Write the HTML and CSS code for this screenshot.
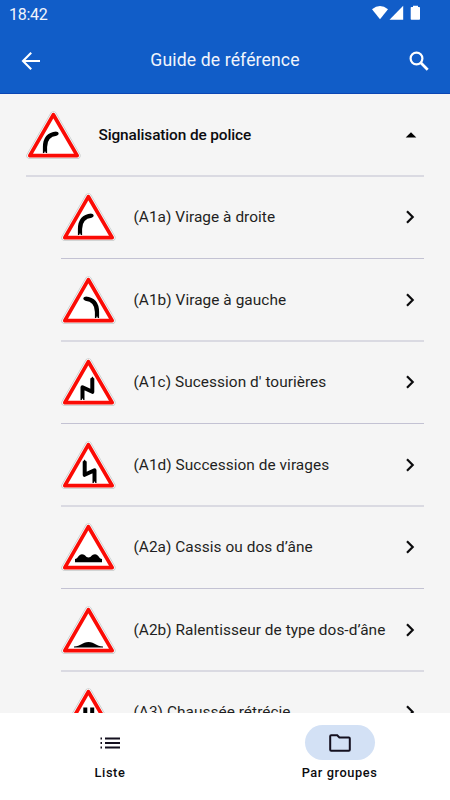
FILE: index.html
```html
<!DOCTYPE html>
<html lang="fr">
<head>
<meta charset="utf-8">
<title>Guide de référence</title>
<link rel="stylesheet" href="styles.css">
</head>
<body>
<svg class="defs" aria-hidden="true">
  <symbol id="sign" viewBox="0 0 55 48">
    <path d="M27.4 3.7 3.8 44.6H51.200Z" fill="#fff" stroke="#c3c7c7" stroke-width="6.8" stroke-linejoin="round"/>
    <path d="M27.4 3.7 3.8 44.6H51.200Z" fill="#fff" stroke="#f6f9f9" stroke-width="5.4" stroke-linejoin="round"/>
    <path d="M27.4 3.7 3.8 44.6H51.200Z" fill="#fff" stroke="#fb0b05" stroke-width="3.7" stroke-linejoin="round"/>
  </symbol>
  <symbol id="right" viewBox="0 0 55 48">
    <path d="M19 42V36C19 28 23 23.4 30.5 22.6" fill="none" stroke="#000" stroke-width="4.2"/>
    <circle cx="30.7" cy="22.6" r="1.9"/><path d="M18 42.5 19 40l1 2.5Z" fill="#fff"/>
  </symbol>
  <symbol id="left" viewBox="0 0 55 48">
    <path d="M36 42V36C36 28 32 23.4 24.5 22.6" fill="none" stroke="#000" stroke-width="4.2"/>
    <circle cx="24.3" cy="22.6" r="1.9"/><path d="M35 42.5 36 40l1 2.5Z" fill="#fff"/>
  </symbol>
  <symbol id="bends-right" viewBox="0 0 55 48">
    <path d="M21.5 42V29.2L31.3 33.800V20.5" fill="none" stroke="#000" stroke-width="4" stroke-linejoin="round"/>
    <path d="M29.4 21 31.5 18.6 33.2 21Z"/><path d="M20.5 42.5l1-2.5 1 2.5Z" fill="#fff"/>
  </symbol>
  <symbol id="bends-left" viewBox="0 0 55 48">
    <path d="M33.5 42V29.2L23.7 33.800V20.5" fill="none" stroke="#000" stroke-width="4" stroke-linejoin="round"/>
    <path d="M21.8 21 23.5 18.6 25.6 21Z"/><path d="M32.5 42.5l1-2.5 1 2.5Z" fill="#fff"/>
  </symbol>
  <symbol id="bumps" viewBox="0 0 55 48">
    <path d="M14 39.3V36C17 36 17.500 31.300 21 31.300C24.500 31.300 24.500 34.500 27.500 34.500S30.500 31.300 34 31.300C37.500 31.300 38 36 41 36V39.300Z"/>
  </symbol>
  <symbol id="hump" viewBox="0 0 55 48">
    <path d="M13 41.500V40.500C20 40.500 21 36 27.500 36S35 40.500 42 40.500V41.500Z"/>
  </symbol>
  <symbol id="narrow" viewBox="0 0 55 48">
    <path d="M22.300 19.500h4v18h-6v-8l2-3zM29.200 19.500h4v7l2 3v8h-6z"/>
  </symbol>
  <symbol id="chevron" viewBox="0 0 10 14">
    <path d="M2 1.300 7.700 7 2 12.700" fill="none" stroke="#0b0b0d" stroke-width="2.200"/>
  </symbol>
</svg>

<header class="top">
  <div class="status">
    <span>18:42</span>
    <svg class="status-icons" width="49" height="16" viewBox="0 0 49 16" fill="#fff">
      <path d="M0 4.200Q8 -2.200 16 4.200L8 14.200Z"/><path d="M17.500 14.800H31.200V.8Z"/>
      <path d="M39 2h2V.800h5V2h1.200q.800 0 .800.800v11.200q0 .800-.800.800h-7.700q-.800 0-.800-.800V2.800q0-.800.800-.800Z"/>
    </svg>
  </div>
  <div class="bar">
    <svg width="20" height="20" viewBox="0 0 20 20" fill="none" stroke="#fff" stroke-width="2.100"><path d="M19 10H3M10.200 1.700 2 10l8.200 8.300"/></svg>
    <h1>Guide de référence</h1>
    <svg width="20" height="20" viewBox="0 0 20 20" fill="none" stroke="#fff" stroke-width="2.200"><circle cx="7.500" cy="7.500" r="5.900"/><path d="m11.800 11.800 6.900 6.900" stroke-width="2.700"/></svg>
  </div>
</header>

<main class="list">
  <div class="row group">
    <svg class="sign"><use href="#sign"/><use href="#right"/></svg><span class="label">Signalisation de police</span>
    <svg class="caret" width="12" height="6" viewBox="0 0 12 6"><path d="M.700 5.500 6 .200l5.300 5.300Z"/></svg>
  </div>
  <div class="items">
    <div class="row"><svg class="sign"><use href="#sign"/><use href="#right"/></svg><span class="label">(A1a) Virage à droite</span><svg class="chev"><use href="#chevron"/></svg></div>
    <div class="row"><svg class="sign"><use href="#sign"/><use href="#left"/></svg><span class="label">(A1b) Virage à gauche</span><svg class="chev"><use href="#chevron"/></svg></div>
    <div class="row"><svg class="sign"><use href="#sign"/><use href="#bends-right"/></svg><span class="label">(A1c) Sucession d' tourières</span><svg class="chev"><use href="#chevron"/></svg></div>
    <div class="row"><svg class="sign"><use href="#sign"/><use href="#bends-left"/></svg><span class="label">(A1d) Succession de virages</span><svg class="chev"><use href="#chevron"/></svg></div>
    <div class="row"><svg class="sign"><use href="#sign"/><use href="#bumps"/></svg><span class="label">(A2a) Cassis ou dos d’âne</span><svg class="chev"><use href="#chevron"/></svg></div>
    <div class="row"><svg class="sign"><use href="#sign"/><use href="#hump"/></svg><span class="label">(A2b) Ralentisseur de type dos-d’âne</span><svg class="chev"><use href="#chevron"/></svg></div>
    <div class="row"><svg class="sign"><use href="#sign"/><use href="#narrow"/></svg><span class="label">(A3) Chaussée rétrécie</span><svg class="chev"><use href="#chevron"/></svg></div>
  </div>
</main>

<nav class="tabs">
  <div class="tab">
    <span class="pill"><svg width="20" height="12" viewBox="0 0 20 12" fill="#14101f"><path d="M5 .500h15v2H5zM5 5h15v2H5zM5 9.500h15v2H5zM.500.500h1.500v2h-1.500zM.500 5h1.500v2h-1.500zM.500 9.500h1.500v2h-1.500z"/></svg></span>
    <span>Liste</span>
  </div>
  <div class="tab">
    <span class="pill active"><svg width="22" height="18" viewBox="0 0 22 18" fill="none" stroke="#14101f" stroke-width="2"><path d="M1.200 2.200q0-1 1-1h6l2.200 2.200h9.400q1 0 1 1v11.400q0 1-1 1H2.200q-1 0-1-1Z"/></svg></span>
    <span>Par groupes</span>
  </div>
</nav>
</body>
</html>
```
FILE: styles.css
```css
* { box-sizing: border-box; }
body {
  margin: 0;
  width: 450px;
  height: 800px;
  overflow: hidden;
  display: flex;
  flex-direction: column;
  background: #f5f5f5;
  color: #0c0c0f;
  font-family: Roboto, sans-serif;
}
.defs { display: none; }
.top {
  flex: none;
  height: 94px;
  background: #115dc8;
  border-bottom: 1px solid #0b46b4;
  color: #fff;
}
.status {
  height: 28px;
  padding: 0 29px 0 9px;
  display: flex;
  align-items: center;
  justify-content: space-between;
  font-size: 16px;
  letter-spacing: -0.3px;
  color: #f1f5fc;
}
.status-icons { margin-top: -2px; }
.bar {
  height: 65px;
  padding: 0 21px;
  display: flex;
  align-items: center;
  justify-content: space-between;
}
.bar h1 {
  margin: 0;
  padding-bottom: 1px;
  font-size: 17.6px;
  font-weight: 400;
  letter-spacing: 0.13px;
  color: #f1f5fc;
}
.list {
  flex: 1;
  min-height: 0;
  overflow: hidden;
  padding: 0 26px;
}
.items { padding-left: 35px; }
.row {
  display: flex;
  align-items: center;
  height: 83px;
  border-bottom: 2px solid #dadae2;
  font-size: 15.4px;
  letter-spacing: 0.05px;
}
.items .row:nth-child(odd) {
  height: 82px;
  padding-bottom: 1px;
  border-bottom: 1px solid #c3c2d3;
}
.items .label { color: #1f1f22; }
.sign { width: 55px; height: 48px; flex: none; }
.label { flex: 1; margin-left: 17.5px; white-space: nowrap; }
.group .label { font-weight: 500; letter-spacing: -0.12px; }
.caret { margin-right: 7.5px; }
.chev { width: 10px; height: 14px; margin-right: 9px; }
.tabs {
  flex: none;
  height: 87px;
  background: #fff;
  display: flex;
  justify-content: space-between;
  padding: 12px 25.5px 0 25px;
}
.tab {
  width: 170px;
  display: flex;
  flex-direction: column;
  align-items: center;
  gap: 5px;
  font-size: 12.8px;
  font-weight: 500;
  line-height: 16px;
  letter-spacing: 0.58px;
}
.pill {
  width: 70px;
  height: 35px;
  border-radius: 18px;
  display: flex;
  align-items: center;
  justify-content: center;
}
.active { background: #d3e1f5; }
```
